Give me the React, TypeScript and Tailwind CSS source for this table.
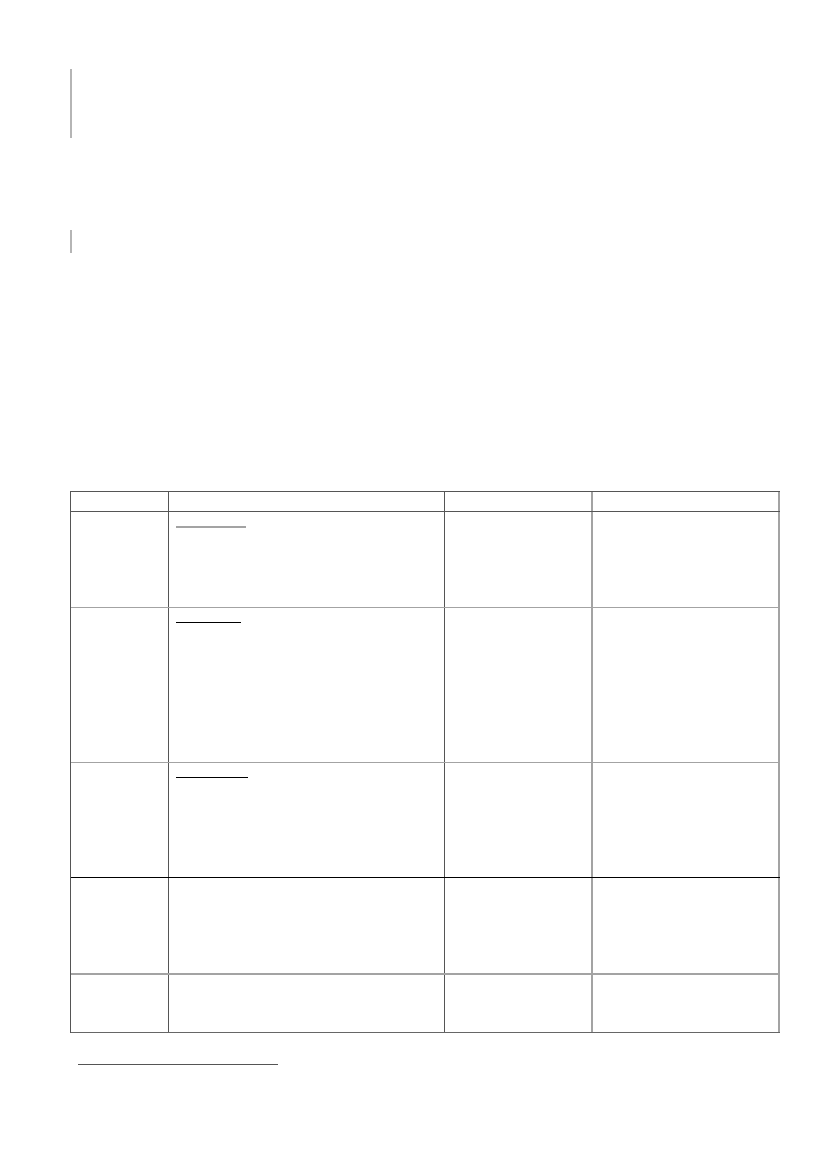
const cols = ['w-[98px]', 'w-[276px]', 'w-[148px]', 'w-[187px]'];
const colBorder = ['border-[#555]', 'border-[#555]', 'border-[#a3a3a3]', 'border-[#a3a3a3]'];

type Row = { h: string; line: string; mark?: { w: string; c: string } };

const rows: Row[] = [
  { h: 'h-[19px]', line: 'border-[#555]' },
  { h: 'h-[95px]', line: 'border-[#a3a3a3]', mark: { w: 'w-[70px]', c: 'bg-[#a3a3a3] h-[2px]' } },
  { h: 'h-[154px]', line: 'border-[#a3a3a3]', mark: { w: 'w-[65px]', c: 'bg-black h-px' } },
  { h: 'h-[114px]', line: 'border-black', mark: { w: 'w-[72px]', c: 'bg-black h-px' } },
  { h: 'h-[95px]', line: 'border-[#a3a3a3] border-b-2' },
  { h: 'h-[57px]', line: 'border-[#666]' },
];

export default function App() {
  return (
    <div className="min-h-[1169px] w-[827px] bg-white font-['Liberation_Sans',sans-serif] text-black">
      <div className="flex flex-col pl-[70px] pt-[69px]">
        <div className="h-[69px] w-0 border-l-2 border-[#b5b5b5]" />
        <div className="mt-[92px] h-[23px] w-0 border-l-2 border-[#b5b5b5]" />

        <div className="mt-[238px] flex w-[710px] flex-col border-l border-t border-[#555]">
          {rows.map((r, i) => (
            <div key={i} className={`flex border-b ${r.line}`}>
              {cols.map((w, j) => (
                <div key={j} className={`${w} ${r.h} border-r ${colBorder[j]} ${j >= 2 ? 'border-r-2' : ''}`}>
                  {j === 1 && r.mark && (
                    <div className="pl-[7px] pt-[14px]">
                      <div className={`${r.mark.w} ${r.mark.c}`} />
                    </div>
                  )}
                </div>
              ))}
            </div>
          ))}
        </div>

        <div className="ml-[8px] mt-[31px] h-px w-[200px] bg-[#555]" />
      </div>
    </div>
  );
}
